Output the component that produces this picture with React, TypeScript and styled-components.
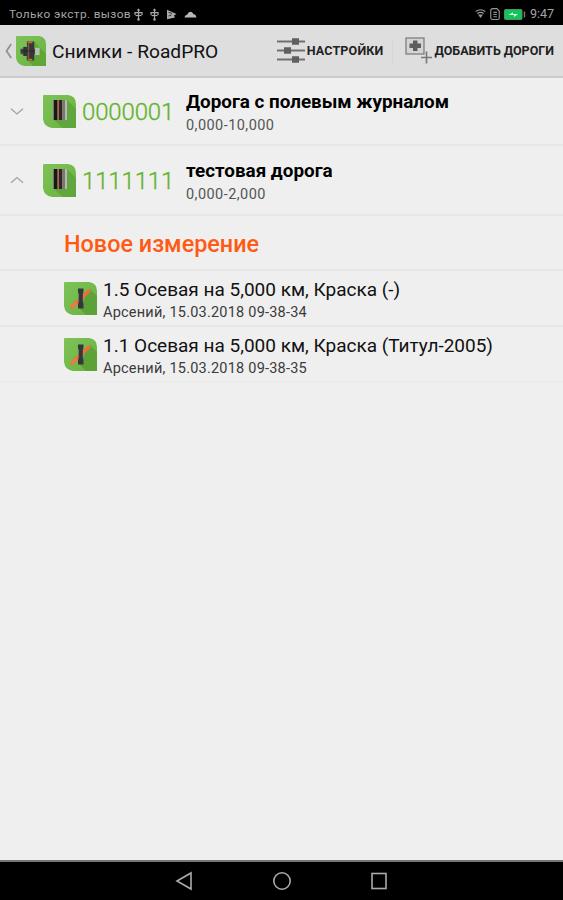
import React from "react";
import styled, { createGlobalStyle } from "styled-components";

const GlobalStyle = createGlobalStyle`
  * { box-sizing: border-box; }
  body { margin: 0; background: #efefef; font-family: Roboto, "Noto Sans", sans-serif; }
`;

const Screen = styled.div`
  width: 100%;
  height: 900px;
  display: flex;
  flex-direction: column;
  background: #efefef;
  color: #111;
  overflow: hidden;
`;

const StatusBar = styled.div`
  height: 25px;
  flex: none;
  display: flex;
  align-items: center;
  justify-content: space-between;
  padding: 3px 9px 0;
  background: #000;
  color: #a6a6a6;
`;

const StatusGroup = styled.div<{ $gap: number }>`
  display: flex;
  align-items: center;
  gap: ${(p) => p.$gap}px;
  svg { display: block; }
`;

const StatusText = styled.span<{ $size: number; $spacing?: number }>`
  font-size: ${(p) => p.$size}px;
  line-height: 16px;
  letter-spacing: ${(p) => p.$spacing ?? 0}px;
  white-space: nowrap;
`;

const StatusIcons = styled(StatusGroup)`
  margin-left: 3px;
`;

const ActionBar = styled.header`
  height: 53px;
  flex: none;
  display: flex;
  align-items: center;
  padding: 0 9px 0 5px;
  background: #dedede;
  border-bottom: 2px solid #cbcbcb;
  svg { display: block; flex: none; }
`;

const Home = styled.div`
  display: flex;
  align-items: center;
  gap: 3px;
`;

const Title = styled.h1`
  margin: 0 auto 0 6px;
  padding-top: 2px;
  font-size: 19.2px;
  line-height: 26px;
  font-weight: 400;
  white-space: nowrap;
`;

const Action = styled.button<{ $gap: number; $spacing: number }>`
  display: flex;
  align-items: center;
  gap: ${(p) => p.$gap}px;
  padding: 0;
  border: 0;
  background: none;
  color: #222;
  font: 700 12.5px/18px Roboto, sans-serif;
  letter-spacing: ${(p) => p.$spacing}px;
  white-space: nowrap;
`;

const Divider = styled.div`
  width: 1px;
  height: 24px;
  margin: 0 12px 0 8px;
  background: #d6d6d6;
`;

const List = styled.main`
  flex: 1;
  display: flex;
  flex-direction: column;
`;

const RoadRow = styled.div<{ $height: number }>`
  height: ${(p) => p.$height}px;
  display: grid;
  grid-template-columns: 33px 33px 110px 1fr;
  align-items: center;
  padding-left: 10px;
  border-bottom: 2px solid #e6e6e6;
  svg { display: block; }
`;

const RoadCode = styled.div`
  padding: 2px 0 0 6px;
  color: #62b32b;
  font-size: 24px;
  line-height: 28px;
  font-weight: 300;
  -webkit-text-stroke: 0.3px #62b32b;
  letter-spacing: -0.15px;
`;

const Lines = styled.div`
  display: flex;
  flex-direction: column;
  padding-top: 5px;
  white-space: nowrap;
`;

const RoadName = styled.div`
  color: #000;
  font-size: 18.85px;
  line-height: 23px;
  font-weight: 700;
`;

const RoadRange = styled.div`
  color: #555;
  font-size: 14.5px;
  line-height: 23px;
  letter-spacing: 0.45px;
`;

const SectionRow = styled.div`
  height: 55px;
  display: flex;
  align-items: center;
  padding: 2px 0 0 64px;
  border-bottom: 2px solid #e6e6e6;
  color: #ff5a14;
  font-size: 23.4px;
  font-weight: 500;
  white-space: nowrap;
`;

const MeasureRow = styled.div<{ $line: string }>`
  height: 56px;
  display: flex;
  align-items: center;
  gap: 7px;
  padding-left: 64px;
  border-bottom: 2px solid ${(p) => p.$line};
  svg { display: block; flex: none; }
`;

const MeasureName = styled.div`
  margin-left: -1px;
  padding-top: 1px;
  font-size: 19px;
  line-height: 24px;
`;

const MeasureInfo = styled.div`
  margin-left: -1px;
  color: #3b3b3b;
  font-size: 14.5px;
  line-height: 22px;
  letter-spacing: 0.22px;
`;

const NavBar = styled.nav`
  height: 40px;
  flex: none;
  display: flex;
  align-items: center;
  justify-content: center;
  gap: 77px;
  border-top: 2px solid #777;
  background: #000;
  svg { display: block; }
`;

const Usb = () => (
  <svg width="9" height="13" viewBox="0 0 9 13" fill="none" stroke="#aaa" strokeWidth="1.2">
    <path d="M4.5 1v11M1 7V4.600h7V7" />
    <path d="M2.700 2.600 4.500.4l1.800 2.200z" fill="#aaa" stroke="none" />
    <circle cx="4.500" cy="11.500" r="1.200" fill="#aaa" stroke="none" />
    <path d="M1.500 7.500h6" />
  </svg>
);

const PlayStore = () => (
  <svg width="11" height="11" viewBox="0 0 11 11">
    <path d="M1 .8 10.500 5 8 6.500 9 8.500 1 10.300z" fill="#aaa" />
    <path d="M2.500 3.200 6 4.500M2.500 7 5.500 6" stroke="#333" />
  </svg>
);

const Cloud = () => (
  <svg width="13" height="7" viewBox="0 0 12 7">
    <path d="M0 6.500C.5 4 2 3.500 3 3.400 4-.2 8-.2 9 3.200c2 .2 2.800 1.700 3 3.300z" fill="#b8b8b8" />
  </svg>
);

const Wifi = () => (
  <svg width="11" height="10" viewBox="0 0 11 10" fill="none" stroke="#999" strokeWidth="1.200">
    <path d="M.7 2.500c3-2.200 6.600-2.200 9.600 0M2.300 4.600c2-1.500 4.400-1.500 6.400 0" />
    <path d="M3 5.600h5L5.500 9z" fill="#999" stroke="none" />
  </svg>
);

const SimCard = () => (
  <svg width="10" height="12" viewBox="0 0 9 11" fill="none" stroke="#959595">
    <path d="M2.500.6h3.800L8.400 3v6c0 1-.5 1.500-1.400 1.500H2.200C1.200 10.500.6 10 .6 9V2.500C.6 1.300 1.200.6 2.500.6z" />
    <path d="M3 4h3.200M3 6h3.200M3 8h3.200" />
  </svg>
);

const Battery = () => (
  <svg width="22" height="11" viewBox="0 0 22 11">
    <rect x=".5" y=".5" width="17.500" height="10" rx="1" fill="#12c55a" stroke="#5a8a6a" />
    <path d="M4.500 6 9 3.200v1.900h5L10 8V6z" fill="#d7ffe5" />
    <path d="M20.500 2.500v6" stroke="#777" strokeWidth="1.500" />
  </svg>
);

const Back = () => (
  <svg width="8" height="18" viewBox="0 0 8 18" fill="none" stroke="#929292" strokeWidth="1.800">
    <path d="M6.200 2 1.500 9l4.700 7" />
  </svg>
);

const Leaf = ({ id, size, children }: { id: string; size: number; children: React.ReactNode }) => (
  <svg width={size} height={size} viewBox="0 0 33 33">
    <defs>
      <linearGradient id={id} x1="0" y1="0" x2="1" y2="1">
        <stop offset="0" stopColor="#7ec258" />
        <stop offset="1" stopColor="#6ab23f" />
      </linearGradient>
    </defs>
    <path d="M1 0H25Q33 1 33 9V33H9Q1 32 0 24V1Q0 0 1 0z" fill={`url(#${id})`} />
    {children}
  </svg>
);

const AppIcon = () => (
  <Leaf id="leafApp" size={30}>
    <path d="M20 6 33 20v13H19L11 25z" fill="#5fa634" />
    <path d="M5 14h16v6H5z" fill="#45484a" />
    <path d="M8 12h4v10H8z" fill="#303335" />
    <path d="M12 6h8v21h-8z" fill="#353739" />
    <path d="M13 6h5v2h-5zM13 25h5v2h-5z" fill="#d06b38" />
    <path d="M13 8h1.500v17H13z" fill="#8c5740" />
    <path d="M21 13h5v8h-5z" fill="#b8c1b5" />
    <path d="M5 16.500h15" stroke="#242829" />
  </Leaf>
);

const RoadIcon = ({ id }: { id: string }) => (
  <Leaf id={id} size={33}>
    <path d="M24 5 33 14v19H20L11 25z" fill="#5fa73c" />
    <path d="M10 5h14v20H10z" fill="#777875" />
    <path d="M11 5h3.500v20H11z" fill="#17171c" />
    <path d="M14.500 5h1.500v20h-1.500z" fill="#c16439" />
    <path d="M16 5h3v20h-3z" fill="#272a2d" />
    <path d="M19 5h1v20h-1z" fill="#8e7765" />
    <path d="M22 5h2v20h-2z" fill="#b7b8b2" />
  </Leaf>
);

const MeasureIcon = ({ id }: { id: string }) => (
  <Leaf id={id} size={33}>
    <path d="m26 7 7 7v19H22l-7-7z" fill="#5ca239" />
    <path d="m7 26 19-18" stroke="#ed6d3b" strokeWidth="3.500" />
    <path d="M14 6.500h5.500v3.500l-.700 2v8l.700 2v4.500H14V22l.700-2v-8l-.700-2z" fill="#34383c" />
    <path d="m7.500 25.500 5-4.700" stroke="#f07a47" strokeWidth="3.500" />
  </Leaf>
);

const Sliders = () => (
  <svg width="28" height="27" viewBox="0 0 28 27">
    <path d="M0 4.500h28M0 13.500h28M0 22.500h28" stroke="#707070" strokeWidth="2" />
    <path d="M15 1.300h7v6.400h-7zM7 10.300h7v6.400H7zM15 19.300h7v6.400h-7z" fill="#606060" />
  </svg>
);

const AddRoads = () => (
  <svg width="28" height="27" viewBox="0 0 28 27">
    <rect x="1" y="1" width="18" height="16" fill="#d4d4d4" stroke="#777" strokeWidth="1.200" />
    <path d="M4.500 6.500H8v-3h4.500v3H16v4.500h-3.500v3H8v-3H4.500z" fill="#5d5d5d" />
    <path d="M21.500 14.500v12M16 20.500h11" stroke="#777" strokeWidth="1.600" />
  </svg>
);

const Chevron = ({ up = false }: { up?: boolean }) => (
  <svg width="14" height="8" viewBox="0 0 14 8" fill="none" stroke="#a3a3a3" strokeWidth="1.300">
    <path d={up ? "M1 6.800 7 1.500l6 5.300" : "M1 1.700 7 7l6-5.300"} />
  </svg>
);

const roads = [
  { code: "0000001", name: "Дорога с полевым журналом", range: "0,000-10,000", open: false, height: 68 },
  { code: "1111111", name: "тестовая дорога", range: "0,000-2,000", open: true, height: 70 },
];

const measures = [
  { name: "1.5 Осевая на 5,000 км, Краска (-)", info: "Арсений, 15.03.2018 09-38-34", line: "#e6e6e6" },
  { name: "1.1 Осевая на 5,000 км, Краска (Титул-2005)", info: "Арсений, 15.03.2018 09-38-35", line: "#ebebeb" },
];

export default function App() {
  return (
    <Screen>
      <GlobalStyle />
      <StatusBar>
        <StatusGroup $gap={0}>
          <StatusText $size={11.8} $spacing={0.38}>Только экстр. вызов</StatusText>
          <StatusIcons $gap={7}>
            <Usb />
            <Usb />
            <PlayStore />
            <Cloud />
          </StatusIcons>
        </StatusGroup>
        <StatusGroup $gap={4}>
          <Wifi />
          <SimCard />
          <Battery />
          <StatusText $size={12.5}>9:47</StatusText>
        </StatusGroup>
      </StatusBar>
      <ActionBar>
        <Home>
          <Back />
          <AppIcon />
        </Home>
        <Title>Снимки - RoadPRO</Title>
        <Action $gap={2} $spacing={0.18}>
          <Sliders />
          НАСТРОЙКИ
        </Action>
        <Divider />
        <Action $gap={2} $spacing={0}>
          <AddRoads />
          ДОБАВИТЬ ДОРОГИ
        </Action>
      </ActionBar>
      <List>
        {roads.map((r) => (
          <RoadRow key={r.code} $height={r.height}>
            <Chevron up={r.open} />
            <RoadIcon id={`leaf${r.code}`} />
            <RoadCode>{r.code}</RoadCode>
            <Lines>
              <RoadName>{r.name}</RoadName>
              <RoadRange>{r.range}</RoadRange>
            </Lines>
          </RoadRow>
        ))}
        <SectionRow>Новое измерение</SectionRow>
        {measures.map((m, i) => (
          <MeasureRow key={m.name} $line={m.line}>
            <MeasureIcon id={`measure${i}`} />
            <Lines>
              <MeasureName>{m.name}</MeasureName>
              <MeasureInfo>{m.info}</MeasureInfo>
            </Lines>
          </MeasureRow>
        ))}
      </List>
      <NavBar>
        <svg width="20" height="20" viewBox="0 0 20 20" fill="none" stroke="#aaa" strokeWidth="1.600">
          <path d="M2 10 16 2v16z" />
        </svg>
        <svg width="20" height="20" viewBox="0 0 20 20" fill="none" stroke="#aaa" strokeWidth="1.600">
          <circle cx="10" cy="10" r="8.200" />
        </svg>
        <svg width="20" height="20" viewBox="0 0 20 20" fill="none" stroke="#aaa" strokeWidth="1.600">
          <rect x="3" y="2.500" width="14" height="15" />
        </svg>
      </NavBar>
    </Screen>
  );
}
